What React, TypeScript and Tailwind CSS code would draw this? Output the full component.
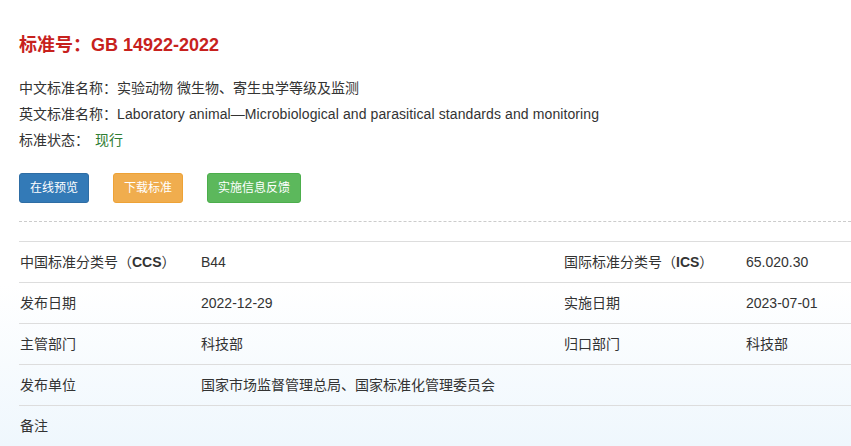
import React from 'react';

const rows: { label: React.ReactNode; value: string; label2?: React.ReactNode; value2?: string }[] = [
  {
    label: (
      <>
        中国标准分类号（<b>CCS</b>）
      </>
    ),
    value: 'B44',
    label2: (
      <>
        国际标准分类号（<b>ICS</b>）
      </>
    ),
    value2: '65.020.30',
  },
  { label: '发布日期', value: '2022-12-29', label2: '实施日期', value2: '2023-07-01' },
  { label: '主管部门', value: '科技部', label2: '归口部门', value2: '科技部' },
  { label: '发布单位', value: '国家市场监督管理总局、国家标准化管理委员会' },
  { label: '备注', value: '' },
];

const App: React.FC = () => (
  <div
    className="min-h-[446px] overflow-hidden bg-[linear-gradient(to_bottom,#ffffff_0px,#ffffff_285px,#eff7fd_446px)] text-[#333] text-[14px] pl-[19px]"
    style={{ fontFamily: '"Liberation Sans", Arial, "Noto Sans CJK SC", sans-serif' }}
  >
    <h1 className="pt-[33px] h-[57px] leading-[24px] text-[18px] font-bold text-[#c7211d]">标准号：GB 14922-2022</h1>
    <div className="pt-[18px] leading-[26px]">
      <p>中文标准名称：实验动物 微生物、寄生虫学等级及监测</p>
      <p>
        英文标准名称：<span className="tracking-[0.1px]">Laboratory animal—Microbiological and parasitical standards and monitoring</span>
      </p>
      <p>
        标准状态：<span className="ml-[6px] text-[#2f7d32]">现行</span>
      </p>
    </div>
    <div className="flex gap-[24px] mt-[20px]">
      <button className="w-[70px] h-[30px] rounded-[3px] bg-[#337ab7] border border-[#2e6da4] text-white text-[12px]">在线预览</button>
      <button className="w-[70px] h-[30px] rounded-[3px] bg-[#f0ad4e] border border-[#eea236] text-white text-[12px]">下载标准</button>
      <button className="w-[94px] h-[30px] rounded-[3px] bg-[#5cb85c] border border-[#4cae4c] text-white text-[12px]">实施信息反馈</button>
    </div>
    <div className="mt-[18px] border-t border-dashed border-[#cccccc]" />
    <div className="mt-[19px] w-[1210px] border-t border-[#dddddd]">
      {rows.map((r, i) => (
        <div key={i} className="grid grid-cols-[182px_363px_182px_483px] h-[41px] items-center border-b border-[#dddddd]">
          <div className="pl-px">{r.label}</div>
          <div>{r.value}</div>
          <div>{r.label2}</div>
          <div>{r.value2}</div>
        </div>
      ))}
    </div>
  </div>
);

export default App;
